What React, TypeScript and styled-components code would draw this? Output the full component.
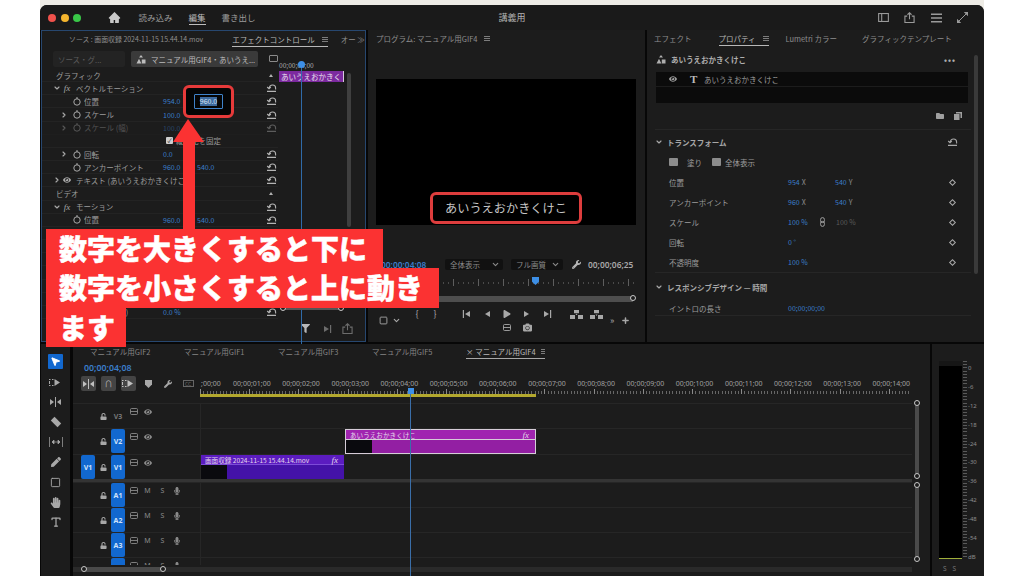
import React from "react";
import styled, { createGlobalStyle } from "styled-components";
import { AiFillHome } from "react-icons/ai";
import { FaEye, FaFilter, FaHandPaper, FaUnlock, FaMicrophone, FaPen, FaPlay, FaWrench, FaCamera, FaFolder } from "react-icons/fa";
import { ChevronDown, ChevronRight, MousePointer2, Plus, Square, Type } from "lucide-react";

const GlobalStyle = createGlobalStyle`
  html, body {
    margin: 0;
    padding: 0;
    background: #fff;
    overflow: hidden;
  }
  * {
    box-sizing: border-box;
  }
`;

const blue = "#3b7ecb";

const Page = styled.div`
  width: 1024px;
  height: 576px;
  padding: 0 40px;
  background: #fff;
  font-family: "Noto Sans CJK JP", "Noto Sans", sans-serif;
  font-size: 7.5px;
  color: #9c9c9c;
`;

const Desk = styled.div`
  height: 576px;
  padding-top: 5px;
  background: #eeece6;
`;

const Window = styled.div`
  position: relative;
  height: 571px;
  padding-left: 1px;
  background: #070707;
  border-radius: 7px 7px 0 0;
  overflow: hidden;
`;

const TitleBar = styled.div`
  height: 25px;
  margin-left: -1px;
  display: grid;
  grid-template-columns: 1fr auto 1fr;
  align-items: center;
  background: #1a1a1a;
  color: #a6a6a6;
`;

const TitleLeft = styled.div`
  display: flex;
  align-items: center;
  padding-left: 8px;
`;

const Light = styled.span<{ $color: string }>`
  width: 8px;
  height: 8px;
  margin-right: 4.5px;
  border-radius: 50%;
  background: ${(p) => p.$color};
`;

const HomeSlot = styled.span`
  display: flex;
  margin: 0 18px 0 22px;
  font-size: 13px;
  color: #c8c8c8;
`;

const NavItem = styled.span<{ $active?: boolean }>`
  margin-right: 16px;
  font-size: 8.5px;
  line-height: 13px;
  color: ${(p) => (p.$active ? "#bdbdbd" : "#9c9c9c")};
  border-bottom: 1px solid ${(p) => (p.$active ? "#bdbdbd" : "transparent")};
`;

const WindowName = styled.span`
  font-size: 9px;
  color: #b4b4b4;
`;

const TitleRight = styled.div`
  display: flex;
  justify-content: flex-end;
  align-items: center;
  gap: 15.5px;
  padding-right: 16px;
  color: #9a9a9a;
`;

const Upper = styled.div`
  height: 312px;
  display: flex;
  gap: 2px;
`;

const Lower = styled.div`
  height: 232px;
  margin-top: 2px;
  display: flex;
  gap: 2px;
`;

const EffectPanel = styled.div`
  width: 325px;
  display: flex;
  flex-direction: column;
  background: #1c1c1c;
  border: 1px solid #27476f;
`;

const ProgramPanel = styled.div`
  width: 277px;
  display: flex;
  flex-direction: column;
  background: #1c1c1c;
`;

const PropertyPanel = styled.div`
  position: relative;
  flex: 1;
  display: flex;
  flex-direction: column;
  background: #1c1c1c;
`;

const Tabs = styled.div<{ $left: number }>`
  height: 17px;
  flex: none;
  display: flex;
  align-items: center;
  padding-left: ${(p) => p.$left}px;
`;

const Tab = styled.span<{ $active?: boolean; $gap?: number }>`
  display: flex;
  align-items: center;
  gap: 7px;
  height: 14px;
  flex: none;
  margin-right: ${(p) => p.$gap ?? 0}px;
  color: ${(p) => (p.$active ? "#b8b8b8" : "#8e8e8e")};
  border-bottom: 1px solid ${(p) => (p.$active ? "#b8b8b8" : "transparent")};
  white-space: nowrap;
`;

const SourceTab = styled(Tab)`
  font-size: 6.9px;
`;

const MenuGlyph = styled.i`
  width: 6px;
  height: 5px;
  border-top: 1px solid #7c7c7c;
  border-bottom: 1px solid #7c7c7c;
  background: linear-gradient(#7c7c7c, #7c7c7c) center / 100% 1px no-repeat;
`;

const EffectBody = styled.div`
  position: relative;
  flex: none;
  display: flex;
`;

const EffectColumn = styled.div`
  width: 236px;
  flex: none;
`;

const SourceRow = styled.div`
  height: 21px;
  padding: 3px 0 2px 11px;
  display: flex;
  gap: 6px;
  align-items: flex-start;
`;

const SourceChip = styled.span<{ $active?: boolean }>`
  height: 16px;
  width: ${(p) => (p.$active ? 127 : 72)}px;
  flex: none;
  display: flex;
  align-items: center;
  gap: 5px;
  padding-left: 5px;
  border-radius: 2px;
  background: ${(p) => (p.$active ? "#3a3a3a" : "#232323")};
  color: ${(p) => (p.$active ? "#bcbcbc" : "#5c5c5c")};
  white-space: nowrap;
  overflow: hidden;
`;

const PanelToggle = styled.span`
  width: 10px;
  height: 7px;
  margin: 4px 0 0 5px;
  border: 1px solid #8a8a8a;
  border-radius: 1px;
`;

const Row = styled.div<{ $dim?: boolean }>`
  height: 13.17px;
  display: flex;
  align-items: center;
  padding-left: 10px;
  border-bottom: 1px solid #232323;
  opacity: ${(p) => (p.$dim ? 0.42 : 1)};
  white-space: nowrap;
`;

const Lead = styled.span<{ $group?: boolean }>`
  width: ${(p) => (p.$group ? 24 : 32)}px;
  flex: none;
  display: flex;
  align-items: center;
  padding-left: ${(p) => (p.$group ? 0 : 7)}px;
  color: #a8a8a8;
`;

const LeadSlot = styled.span<{ $gap?: number }>`
  width: 10px;
  margin-right: ${(p) => p.$gap ?? 0}px;
  display: flex;
  justify-content: center;
`;

const Fx = styled.span`
  font-family: "Liberation Serif", serif;
  font-style: italic;
  font-size: 9px;
  line-height: 10px;
`;

const RowName = styled.span<{ $section?: boolean }>`
  flex: 1;
  min-width: 0;
  padding-left: ${(p) => (p.$section ? 4 : 0)}px;
  overflow: hidden;
`;

const Values = styled.span`
  width: 101px;
  flex: none;
  display: flex;
  align-items: center;
`;

const Value = styled.span`
  width: 34px;
  flex: none;
  font-size: 7px;
  color: ${blue};
`;

const Checkbox = styled.span`
  width: 7px;
  height: 7px;
  margin: 0 3px;
  flex: none;
  display: flex;
  align-items: center;
  justify-content: center;
  background: #cfcfcf;
  border-radius: 1px;
  color: #222;
  font-size: 6px;
  line-height: 7px;
`;

const RowEnd = styled.span`
  width: 14px;
  flex: none;
  display: flex;
  justify-content: center;
  color: #b4b4b4;
`;

const UpTriangle = styled.i`
  width: 0;
  height: 0;
  border-left: 2.5px solid transparent;
  border-right: 2.5px solid transparent;
  border-bottom: 3px solid #b0b0b0;
`;

const MiniTimeline = styled.div`
  position: relative;
  width: 69px;
  flex: none;
  padding-left: 1px;
`;

const MiniLabel = styled.div`
  height: 11px;
  margin-top: 12px;
  font-size: 6.6px;
  line-height: 11px;
  color: #b0b0b0;
  white-space: nowrap;
`;

const MiniClip = styled.div`
  width: 65px;
  height: 11px;
  padding-left: 2px;
  background: #7c2a9f;
  border-right: 1px solid #d8c8e0;
  color: #e9e0ee;
  font-size: 7.5px;
  line-height: 11px;
  white-space: nowrap;
`;

const MiniPlayhead = styled.div`
  position: absolute;
  left: 23px;
  top: 17px;
  bottom: -25px;
  width: 1px;
  background: #2f6aa8;

  &::before {
    content: "";
    position: absolute;
    left: -3px;
    top: -4px;
    width: 7px;
    height: 7px;
    border-radius: 50%;
    background: #3d8fe6;
  }
`;

const MiniSlider = styled.div`
  position: relative;
  width: 58px;
  height: 4px;
  margin: 224px 0 0 4px;
  background: #555;
`;

const Knob = styled.i<{ $side: "left" | "right" | "top" | "bottom" }>`
  position: absolute;
  ${(p) => p.$side}: -3px;
  ${(p) => (p.$side === "left" || p.$side === "right" ? "top: -1px;" : "left: -1px;")}
  width: 6px;
  height: 6px;
  border-radius: 50%;
  background: #1c1c1c;
  border: 1.2px solid #c8c8c8;
`;

const ScrollBar = styled.div<{ $top: number; $height: number }>`
  width: 4px;
  height: ${(p) => p.$height}px;
  margin-top: ${(p) => p.$top}px;
  flex: none;
  border-radius: 2px;
  background: #3f3f3f;
`;

const PanelFooter = styled.div`
  flex: 1;
  display: flex;
  justify-content: flex-end;
  align-items: center;
  gap: 10px;
  padding: 0 12px 2px 0;
  color: #6c6c6c;
`;

const FooterFilter = styled.span`
  display: flex;
  margin-right: 2px;
  color: #b8b8b8;
`;

const Highlight = styled.div`
  position: absolute;
  left: 143px;
  top: 80px;
  width: 51px;
  height: 33px;
  display: flex;
  align-items: center;
  justify-content: center;
  background: #050505;
  border: 3px solid #e63a3a;
  border-radius: 6px;
`;

const NumberInput = styled.div`
  width: 29px;
  height: 15px;
  display: flex;
  align-items: center;
  justify-content: center;
  border: 1.5px solid #3f82c9;
  border-radius: 1px;
`;

const Selected = styled.span`
  background: #3d6a9e;
  color: #d8e4f2;
  font-size: 7px;
  line-height: 9px;
`;

const Arrow = styled.svg`
  position: absolute;
  left: 133px;
  top: 114px;
`;

const Caption = styled.div`
  position: absolute;
  left: 6px;
  top: 224px;
  color: #fff;
  font-size: 28px;
  font-weight: 900;
  line-height: 39.4px;
  white-space: nowrap;
  -webkit-text-stroke: 0.5px #fff;
`;

const CaptionLine = styled.div<{ $end?: number }>`
  width: fit-content;
  padding: 0 ${(p) => p.$end ?? 16}px 0 13px;
  background: #fb3232;
`;

const Video = styled.div`
  width: 260px;
  height: 146px;
  margin: 32px 0 0 8px;
  flex: none;
  display: flex;
  align-items: flex-end;
  justify-content: center;
  padding-bottom: 1px;
  background: #000;
`;

const TitleBox = styled.div`
  width: 152px;
  height: 32px;
  display: flex;
  align-items: center;
  justify-content: center;
  border: 3px solid #dd3d3d;
  border-radius: 6px;
  font-size: 12.2px;
  color: #c4c4c4;
`;

const MonitorRow = styled.div`
  height: 12px;
  margin-top: 33px;
  display: flex;
  align-items: center;
  padding-left: 13px;
`;

const Timecode = styled.span<{ $width?: number }>`
  width: ${(p) => p.$width ?? 47}px;
  flex: none;
  font-family: "Noto Sans", sans-serif;
  font-size: 8.4px;
  font-weight: 600;
  color: ${blue};
  white-space: nowrap;
`;

const Dropdown = styled.span<{ $width: number }>`
  width: ${(p) => p.$width}px;
  height: 11px;
  flex: none;
  margin-left: ${(p) => (p.$width > 55 ? 17 : 8)}px;
  display: flex;
  align-items: center;
  justify-content: space-between;
  padding: 0 3px 0 5px;
  background: #111;
  border-radius: 2px;
  color: #8a8a8a;
`;

const WrenchSlot = styled.span`
  display: flex;
  margin: 0 7px 0 9px;
  font-size: 9px;
  color: #b4b4b4;
`;

const Duration = styled.span`
  font-family: "Noto Sans", sans-serif;
  font-size: 8.4px;
  font-weight: 600;
  color: #a8a8a8;
  white-space: nowrap;
`;

const MonitorRuler = styled.div`
  position: relative;
  height: 10px;
  margin: 7px 9px 0 10px;
  background:
    repeating-linear-gradient(90deg, #5e5e5e 0 1px, transparent 1px 25px) 0 2px / 100% 7px no-repeat,
    repeating-linear-gradient(90deg, #4a4a4a 0 1px, transparent 1px 5px) 0 5px / 100% 2px no-repeat;
`;

const MonitorHead = styled.i`
  position: absolute;
  left: 154px;
  top: 0;
  width: 7px;
  height: 8px;
  background: #3d8fe6;
  clip-path: polygon(0 0, 100% 0, 100% 60%, 50% 100%, 0 60%);
`;

const MonitorBar = styled.div`
  position: relative;
  height: 6px;
  margin: 9px 12px 0 10px;
  background: #4e4e4e;
`;

const Transport = styled.div`
  height: 27px;
  margin-top: 5px;
  display: flex;
  align-items: center;
`;

const TransportLeft = styled.div`
  width: 40px;
  flex: none;
  display: flex;
  align-items: center;
  gap: 4px;
  padding-left: 11px;
  color: #aaa;
`;

const TransportCenter = styled.div`
  width: 198px;
  flex: none;
`;

const ButtonRow = styled.div<{ $left?: number }>`
  height: 13px;
  display: flex;
  align-items: center;
  margin-left: ${(p) => p.$left ?? 0}px;
  color: #a8a8a8;
`;

const Control = styled.span<{ $w?: number; $gap?: number }>`
  width: ${(p) => p.$w ?? 20}px;
  margin-right: ${(p) => p.$gap ?? 0}px;
  flex: none;
  display: flex;
  justify-content: center;
  font-size: 9px;
  line-height: 12px;
`;

const TransportRight = styled.div`
  display: flex;
  align-items: center;
  gap: 7px;
  padding-left: 4px;
  color: #a8a8a8;
  font-size: 9px;
`;

const PropTitle = styled.div`
  height: 25px;
  flex: none;
  display: flex;
  align-items: center;
  padding: 0 28px 0 9px;
  gap: 5px;
  color: #aeaeae;
  font-weight: 700;
`;

const Dots = styled.span`
  margin-left: auto;
  letter-spacing: 1px;
  font-size: 8px;
  font-weight: 700;
`;

const LayerList = styled.div`
  width: 312px;
  height: 31px;
  margin-left: 9px;
  flex: none;
  background: #0b0b0b;
`;

const LayerRow = styled.div`
  height: 15px;
  display: flex;
  align-items: center;
  padding-left: 13px;
  border-bottom: 1px solid #1c1c1c;
  color: #9c9c9c;
`;

const LayerT = styled.span`
  width: 24px;
  padding-left: 13px;
  margin-right: 3px;
  font-family: "Liberation Serif", serif;
  font-size: 11px;
  font-weight: 700;
  line-height: 15px;
  color: #bbb;
`;

const ListTools = styled.div`
  height: 26px;
  flex: none;
  display: flex;
  align-items: center;
  justify-content: flex-end;
  gap: 10px;
  padding-right: 22px;
  color: #a0a0a0;
`;

const Divider = styled.div`
  height: 1px;
  width: 316px;
  margin-left: 8px;
  flex: none;
  background: #262626;
`;

const SectionHead = styled.div<{ $h: number }>`
  height: ${(p) => p.$h}px;
  flex: none;
  display: flex;
  align-items: center;
  gap: 4px;
  padding: 0 26px 0 8px;
  font-weight: 700;
  color: #a8a8a8;
  white-space: nowrap;
`;

const HeadEnd = styled.span`
  margin-left: auto;
  display: flex;
`;

const FillRow = styled.div`
  height: 16px;
  margin-bottom: 2px;
  flex: none;
  display: flex;
  align-items: center;
  padding-left: 22px;
`;

const FillIcon = styled.i<{ $gap: number }>`
  width: 9px;
  height: 8px;
  margin-right: ${(p) => p.$gap}px;
  background: #8c8c8c;
  border-radius: 1px;
`;

const FillLabel = styled.span<{ $w: number }>`
  width: ${(p) => p.$w}px;
`;

const PropRow = styled.div<{ $h?: number }>`
  height: ${(p) => p.$h ?? 20}px;
  flex: none;
  display: flex;
  align-items: center;
  padding: 0 29px 0 22px;
`;

const PropLabel = styled.span`
  width: 119px;
  flex: none;
`;

const PropValue = styled.span`
  width: 47px;
  flex: none;
  display: flex;
  gap: 2px;
  font-size: 7px;
  color: ${blue};
`;

const Axis = styled.span`
  color: #8c8c8c;
`;

const LinkSlot = styled.span`
  width: 18px;
  margin: 0 5px 0 -22px;
  flex: none;
  display: flex;
  justify-content: center;
  color: #a0a0a0;
`;

const DimValue = styled.span`
  font-size: 7px;
  color: #5a5a5a;
`;

const Diamond = styled.i`
  margin-left: auto;
  width: 5px;
  height: 5px;
  border: 1px solid #aaa;
  transform: rotate(45deg);
`;

const PropScroll = styled.div`
  position: absolute;
  left: 327px;
  top: 25px;
  width: 4px;
  height: 219px;
  border-radius: 2px;
  background: #3a3a3a;
`;

const Toolbar = styled.div`
  width: 29px;
  margin-right: 1px;
  padding-top: 8px;
  flex: none;
  display: flex;
  flex-direction: column;
  align-items: center;
  background: #1c1c1c;
  color: #a8a8a8;
`;

const ToolCell = styled.div<{ $active?: boolean }>`
  width: 15px;
  height: ${(p) => (p.$active ? 15 : 20)}px;
  margin: ${(p) => (p.$active ? "2px 0 3px" : 0)};
  flex: none;
  display: flex;
  align-items: center;
  justify-content: center;
  border-radius: 1px;
  background: ${(p) => (p.$active ? "#1268cf" : "transparent")};
  color: ${(p) => (p.$active ? "#fff" : "#a8a8a8")};
`;

const TimelinePanel = styled.div`
  position: relative;
  width: 857px;
  flex: none;
  background: #1c1c1c;
  overflow: hidden;
`;

const SeqTabs = styled.div`
  height: 15px;
  display: flex;
  align-items: center;
  padding-left: 17px;
`;

const SeqTab = styled.span<{ $active?: boolean }>`
  display: flex;
  align-items: center;
  gap: 5px;
  height: 15px;
  width: ${(p) => (p.$active ? 79 : 94)}px;
  flex: none;
  color: ${(p) => (p.$active ? "#b8b8b8" : "#858585")};
  border-bottom: 1px solid ${(p) => (p.$active ? "#a8a8a8" : "transparent")};
  white-space: nowrap;
`;

const TimeHeader = styled.div`
  height: 44px;
  display: flex;
`;

const HeaderLeft = styled.div`
  width: 127px;
  flex: none;
  padding: 2px 0 0 8px;
`;

const HeaderTimecode = styled(Timecode)`
  display: block;
  margin-left: 3px;
  font-size: 8.8px;
  line-height: 14px;
`;

const HeaderTools = styled.div`
  margin-top: 1px;
  display: flex;
  align-items: center;
`;

const ToolButton = styled.span`
  width: 15px;
  height: 15px;
  margin-right: 5px;
  flex: none;
  display: flex;
  align-items: center;
  justify-content: center;
  background: #444;
  border-radius: 2px;
  color: #c0c0c0;
  font-size: 8px;
`;

const ToolIcon = styled.span`
  width: 20px;
  flex: none;
  display: flex;
  justify-content: center;
  color: #a8a8a8;
  font-size: 8px;

  &:nth-child(4) {
    margin-left: -3px;
  }
`;

const CcBox = styled.span`
  width: 11px;
  height: 7px;
  display: flex;
  align-items: center;
  justify-content: center;
  border: 1px solid #666;
  color: #666;
  font-size: 5px;
  line-height: 5px;
`;

const Ruler = styled.div`
  width: 712px;
  padding-top: 20px;
  flex: none;
`;

const RulerLabels = styled.div`
  height: 10px;
  display: flex;
  font-family: "Noto Sans", sans-serif;
  font-size: 7px;
  line-height: 10px;
  color: #a0a0a0;
`;

const RulerLabel = styled.span<{ $first?: boolean }>`
  width: ${(p) => (p.$first ? 33 : 49.2)}px;
  padding-left: ${(p) => (p.$first ? 1 : 0)}px;
  flex: none;
  white-space: nowrap;
`;

const Ticks = styled.div`
  height: 5px;
  background:
    repeating-linear-gradient(90deg, #8a8a8a 0 1px, transparent 1px 49.2px),
    repeating-linear-gradient(90deg, #666 0 1px, transparent 1px 3.28px) 0 2px / 100% 3px no-repeat;
`;

const WorkArea = styled.div`
  width: 336px;
  height: 3px;
  background: #b3a82e;
`;

const TrackArea = styled.div`
  height: 162px;
  display: flex;
`;

const TrackList = styled.div`
  width: 839px;
  flex: none;
`;

const Track = styled.div<{ $h: number }>`
  height: ${(p) => p.$h}px;
  display: flex;
  border-top: 1px solid #262626;
  overflow: hidden;
`;

const TrackHead = styled.div`
  width: 127px;
  height: 24px;
  flex: none;
  display: flex;
  align-items: center;
  padding-left: 8px;
`;

const Patch = styled.span<{ $on?: boolean }>`
  width: 14px;
  height: 24px;
  flex: none;
  display: flex;
  align-items: center;
  justify-content: center;
  border-radius: 2px;
  background: ${(p) => (p.$on ? "#1268cf" : "transparent")};
  color: ${(p) => (p.$on ? "#cfe2fa" : "#777")};
  font-family: "Noto Sans", sans-serif;
  font-size: 7px;
  font-weight: 700;
`;

const LockSlot = styled.span`
  width: 16px;
  flex: none;
  display: flex;
  justify-content: center;
  color: #a8a8a8;
  font-size: 8px;
`;

const TrackIcons = styled.span`
  display: flex;
  align-items: center;
  margin: 0 0 9px 2px;
  color: #8a8a8a;
  font-size: 7px;
  font-family: "Noto Sans", sans-serif;
`;

const TrackIcon = styled.span<{ $w: number }>`
  width: ${(p) => p.$w}px;
  flex: none;
  display: flex;
  justify-content: center;
`;

const Lane = styled.div`
  flex: 1;
  min-width: 0;
  border-left: 1px solid #262626;
`;

const Clip = styled.div<{ $left: number; $width: number; $head: string; $body: string; $edge?: string }>`
  width: ${(p) => p.$width}px;
  height: 100%;
  margin-left: ${(p) => p.$left}px;
  display: flex;
  flex-direction: column;
  background: ${(p) => p.$body};
  border: ${(p) => (p.$edge ? `1px solid ${p.$edge}` : "0")};
  --head: ${(p) => p.$head};
  --edge: ${(p) => p.$edge ?? "#7d4bd8"};
`;

const ClipHead = styled.div`
  height: 10px;
  flex: none;
  display: flex;
  justify-content: space-between;
  align-items: center;
  padding: 0 6px 0 4px;
  background: var(--head);
  border-bottom: 1px solid var(--edge);
  color: #e3d7ea;
  font-size: 6.6px;
  white-space: nowrap;
`;

const ClipThumb = styled.div`
  width: 26px;
  flex: 1;
  background: #0a0a0e;
`;

const ThickLine = styled.div`
  height: 3px;
  margin-top: 0;
  background: #343434;
`;

const ScrollColumn = styled.div`
  width: 18px;
  flex: none;
  display: flex;
  flex-direction: column;
  align-items: flex-start;
  padding-left: 3px;
`;

const VScroll = styled.div<{ $h: number; $gap: number }>`
  position: relative;
  width: 4px;
  height: ${(p) => p.$h}px;
  margin-top: ${(p) => p.$gap}px;
  flex: none;
  background: #4a4a4a;
`;

const BottomScroll = styled.div`
  width: 839px;
  height: 5px;
  margin-top: 2px;
  padding-left: 11px;
  background: #2a2a2a;
`;

const ScrollThumb = styled.div`
  position: relative;
  width: 79px;
  height: 5px;
  background: #4a4a4a;
`;

const Playhead = styled.div`
  position: absolute;
  left: 337px;
  top: 45px;
  bottom: 0;
  width: 1px;
  background: #3a6ea8;

  &::before {
    content: "";
    position: absolute;
    left: -2px;
    top: -1px;
    width: 6px;
    height: 6px;
    background: #3d8fe6;
  }
`;

const MeterPanel = styled.div`
  flex: 1;
  padding: 17px 0 0 7px;
  background: #1c1c1c;
`;

const MeterRow = styled.div`
  height: 198px;
  display: flex;
`;

const MeterBar = styled.div`
  width: 23px;
  flex: none;
  background: linear-gradient(#161616 0 5px, #000 5px);
  border-bottom: 1px solid #9fae3a;
`;

const MeterScale = styled.div`
  width: 4px;
  margin-left: 1px;
  flex: none;
  background: repeating-linear-gradient(#5a5a5a 0 1px, transparent 1px 3.2px);
`;

const MeterLabels = styled.div`
  flex: 1;
  margin-bottom: -2px;
  padding: 3px 0 0 1px;
  display: flex;
  flex-direction: column;
  justify-content: space-between;
  font-family: "Noto Sans", sans-serif;
  font-size: 6px;
  line-height: 8px;
  color: #8c8c8c;
`;

const MeterSolo = styled.div`
  margin-top: 5px;
  display: flex;
  gap: 6px;
  padding-left: 4px;
  font-family: "Noto Sans", sans-serif;
  font-size: 6.5px;
  color: #777;
`;

const ResetIcon = () => (
  <svg width="11" height="8" viewBox="0 0 11 8" fill="none" stroke="currentColor" strokeWidth="1.1">
    <path d="M1 7.4h9M3 4.4C3.4 2 5 1 6.6 1c1.8 0 3 1.2 3 3v1.4M1.2 3l1.8 1.8L4.8 3" />
  </svg>
);

const Stopwatch = () => (
  <svg width="8" height="9" viewBox="0 0 8 9" fill="none" stroke="currentColor" strokeWidth="1">
    <circle cx="4" cy="5" r="3.2" />
    <path d="M4 0v2" />
  </svg>
);

const Chevron = ({ open }: { open?: boolean }) =>
  open ? <ChevronDown size={8} strokeWidth={3.5} /> : <ChevronRight size={8} strokeWidth={3.5} />;

const GraphicIcon = () => (
  <svg width="10" height="9" viewBox="0 0 10 9" fill="currentColor">
    <path d="M5 0l2 2.6H3zM0.5 8.5L3 3.8l2.4 4.7zM5.8 4.5h3.7v4H5.8z" />
  </svg>
);

const CameraTrack = () => (
  <svg width="8" height="7" viewBox="0 0 8 7" fill="none" stroke="currentColor" strokeWidth="0.9">
    <rect x="0.5" y="0.5" width="7" height="6" rx="1" />
    <path d="M0.5 3.5h7" />
  </svg>
);

const PanelIcon = () => (
  <svg width="11" height="9" viewBox="0 0 12 10" fill="none" stroke="currentColor" strokeWidth="1.2">
    <rect x="0.6" y="0.6" width="10.8" height="8.8" />
    <path d="M4 0.6v8.8" />
  </svg>
);

const ShareIcon = () => (
  <svg width="11" height="11" viewBox="0 0 12 12" fill="none" stroke="currentColor" strokeWidth="1.2">
    <path d="M3.5 4.5H1v7h10v-7H8.5M6 8V0.8M3.8 3L6 0.8 8.2 3" />
  </svg>
);

const LinesIcon = () => (
  <svg width="11" height="10" viewBox="0 0 12 10" stroke="currentColor" strokeWidth="1.6">
    <path d="M0 1h12M0 5h12M0 9h12" />
  </svg>
);

const ExpandIcon = () => (
  <svg width="11" height="11" viewBox="0 0 11 11" fill="currentColor">
    <path d="M11 0v4.2L6.8 0zM0 11V6.8L4.2 11z" />
    <path d="M2 9l7-7" stroke="currentColor" />
  </svg>
);

const LinkIcon = () => (
  <svg width="5" height="10" viewBox="0 0 5 10" fill="none" stroke="currentColor" strokeWidth="1">
    <rect x="0.6" y="0.6" width="3.8" height="5" rx="1.9" />
    <rect x="0.6" y="4.4" width="3.8" height="5" rx="1.9" />
  </svg>
);

const MarkerIcon = () => (
  <svg width="7" height="8" viewBox="0 0 7 8" fill="currentColor">
    <path d="M0 0h7v4.5L3.5 8 0 4.5z" />
  </svg>
);

const NewItemIcon = () => (
  <svg width="8" height="8" viewBox="0 0 8 8" fill="currentColor">
    <path d="M2 0h6v6H6.5V1.5H2zM0 2h5.5v6H0z" />
  </svg>
);

const StepIcon = ({ flip, bar }: { flip?: boolean; bar?: boolean }) => (
  <svg width="10" height="8" viewBox="0 0 10 8" fill="currentColor" style={flip ? { transform: "scaleX(-1)" } : undefined}>
    <path d="M2 1v6L7 4z" />
    {bar && <path d="M8 0h1.2v8H8z" />}
  </svg>
);

const LiftIcon = ({ down }: { down?: boolean }) => (
  <svg width="13" height="9" viewBox="0 0 13 9" fill="currentColor">
    <path d="M4 0h5v3.2H4zM0 5h5v4H0zM8 5h5v4H8z" />
    <path d={down ? "M5.5 4.5h2L6.5 6z" : "M6.5 3.6l1 1.4h-2z"} />
  </svg>
);

const TrackSelectIcon = () => (
  <svg width="13" height="9" viewBox="0 0 13 9" fill="currentColor">
    <path d="M0 1h1.5v1H0zM3 1h1.5v1H3zM0 7h1.5v1H0zM3 7h1.5v1H3zM0 3h1v3H0zM5.5 1v7L11 4.5z" />
  </svg>
);

const RippleIcon = () => (
  <svg width="13" height="10" viewBox="0 0 13 10" fill="currentColor">
    <path d="M6 0h1v10H6zM5 5L1 2v6zM8 5l4-3v6z" />
  </svg>
);

const RazorIcon = () => (
  <svg width="12" height="12" viewBox="0 0 12 12" fill="currentColor">
    <path d="M4.5 0.8L11.2 7.5 7.5 11.2 0.8 4.5z" />
  </svg>
);

const SlipIcon = () => (
  <svg width="14" height="10" viewBox="0 0 14 10" fill="currentColor" stroke="currentColor" strokeWidth="0.7">
    <path d="M0.5 0v10M13.5 0v10M3 5h8M3 5l2-2v4zM11 5L9 3v4z" />
  </svg>
);

const effectRows = [
  { type: "section", name: "グラフィック" },
  { type: "group", name: "ベクトルモーション", fx: true, open: true },
  { type: "prop", name: "位置", values: ["954.0"] },
  { type: "prop", name: "スケール", values: ["100.0"], chevron: true },
  { type: "prop", name: "スケール (幅)", values: ["100.0"], chevron: true, dim: true },
  { type: "check", name: "", label: "縦横比を固定" },
  { type: "prop", name: "回転", values: ["0.0"], chevron: true },
  { type: "prop", name: "アンカーポイント", values: ["960.0", "540.0"] },
  { type: "group", name: "テキスト (あいうえおかきくけこ)" },
  { type: "section", name: "ビデオ" },
  { type: "group", name: "モーション", fx: true, open: true },
  { type: "prop", name: "位置", values: ["960.0", "540.0"] },
  { type: "spacer", name: "" },
  { type: "spacer", name: "" },
  { type: "spacer", name: "" },
  { type: "spacer", name: "" },
  { type: "spacer", name: "" },
  { type: "spacer", name: "" },
  { type: "prop", name: "切り抜き (幅)", values: ["0.0 %"] },
];

const transformRows = [
  { name: "位置", x: "954", y: "540" },
  { name: "アンカーポイント", x: "960", y: "540" },
  { name: "スケール", pct: "100 %", link: "100 %" },
  { name: "回転", pct: "0 °" },
  { name: "不透明度", pct: "100 %" },
];

const rulerLabels = [
  "00;00;01;00", "00;00;02;00", "00;00;03;00", "00;00;04;00", "00;00;05;00", "00;00;06;00", "00;00;07;00",
  "00;00;08;00", "00;00;09;00", "00;00;10;00", "00;00;11;00", "00;00;12;00", "00;00;13;00", "00;00;14;00",
];

const meterLabels = ["0", "-6", "-12", "-18", "-24", "-30", "-36", "-42", "-48", "-54", "dB"];

const EffectLine = ({ row }: { row: (typeof effectRows)[number] }) => {
  if (row.type === "spacer") return <Row />;
  if (row.type === "section") {
    return (
      <Row>
        <RowName $section>{row.name}</RowName>
        <RowEnd>
          <UpTriangle />
        </RowEnd>
      </Row>
    );
  }
  if (row.type === "group") {
    return (
      <Row>
        <Lead $group>
          <LeadSlot>
            <Chevron open={row.open} />
          </LeadSlot>
          <LeadSlot $gap={4}>{row.fx ? <Fx>fx</Fx> : <FaEye size={8} />}</LeadSlot>
        </Lead>
        <RowName>{row.name}</RowName>
        <RowEnd>
          <ResetIcon />
        </RowEnd>
      </Row>
    );
  }
  if (row.type === "check") {
    return (
      <Row>
        <Lead />
        <RowName />
        <Values>
          <Checkbox>✓</Checkbox>
          <span>{row.label}</span>
        </Values>
        <RowEnd />
      </Row>
    );
  }
  return (
    <Row $dim={row.dim}>
      <Lead>
        <LeadSlot $gap={3}>{row.chevron && <Chevron />}</LeadSlot>
        <LeadSlot $gap={2}>{row.name === "切り抜き (幅)" ? null : <Stopwatch />}</LeadSlot>
      </Lead>
      <RowName>{row.name}</RowName>
      <Values>
        {row.values?.map((v) => (
          <Value key={v}>{v}</Value>
        ))}
      </Values>
      <RowEnd>
        <ResetIcon />
      </RowEnd>
    </Row>
  );
};

const VideoTrack = ({ name, patch, on, children, h }: { name: string; patch?: boolean; on?: boolean; children?: React.ReactNode; h: number }) => (
  <Track $h={h}>
    <TrackHead>
      <Patch $on={patch}>{patch ? "V1" : ""}</Patch>
      <LockSlot>
        <FaUnlock size={7} />
      </LockSlot>
      <Patch $on={on}>{name}</Patch>
      <TrackIcons>
        <TrackIcon $w={13}>
          <CameraTrack />
        </TrackIcon>
        <TrackIcon $w={15}>
          <FaEye size={8} />
        </TrackIcon>
      </TrackIcons>
    </TrackHead>
    <Lane>{children}</Lane>
  </Track>
);

const AudioTrack = ({ name, h }: { name: string; h: number }) => (
  <Track $h={h}>
    <TrackHead>
      <Patch />
      <LockSlot>
        <FaUnlock size={7} />
      </LockSlot>
      <Patch $on>{name}</Patch>
      <TrackIcons>
        <TrackIcon $w={13}>
          <CameraTrack />
        </TrackIcon>
        <TrackIcon $w={15}>M</TrackIcon>
        <TrackIcon $w={15}>S</TrackIcon>
        <TrackIcon $w={14}>
          <FaMicrophone size={8} />
        </TrackIcon>
      </TrackIcons>
    </TrackHead>
    <Lane />
  </Track>
);

const App = () => {
  return (
    <Page>
      <GlobalStyle />
      <Desk>
        <Window>
          <TitleBar>
            <TitleLeft>
              <Light $color="#f0524c" />
              <Light $color="#f4b52e" />
              <Light $color="#39c748" />
              <HomeSlot>
                <AiFillHome />
              </HomeSlot>
              <NavItem>読み込み</NavItem>
              <NavItem $active>編集</NavItem>
              <NavItem>書き出し</NavItem>
            </TitleLeft>
            <WindowName>講義用</WindowName>
            <TitleRight>
              <PanelIcon />
              <ShareIcon />
              <LinesIcon />
              <ExpandIcon />
            </TitleRight>
          </TitleBar>

          <Upper>
            <EffectPanel>
              <Tabs $left={27}>
                <SourceTab $gap={29}>ソース : 画面収録 2024-11-15 15.44.14.mov</SourceTab>
                <Tab $active $gap={13}>
                  エフェクトコントロール
                  <MenuGlyph />
                </Tab>
                <Tab>オー ≫</Tab>
              </Tabs>
              <EffectBody>
                <EffectColumn>
                  <SourceRow>
                    <SourceChip>ソース・グ...</SourceChip>
                    <SourceChip $active>
                      <GraphicIcon />
                      マニュアル用GIF4・あいうえ...
                    </SourceChip>
                    <PanelToggle />
                  </SourceRow>
                  {effectRows.map((row, i) => (
                    <EffectLine key={i} row={row} />
                  ))}
                </EffectColumn>
                <MiniTimeline>
                  <MiniLabel>00;00;04;00</MiniLabel>
                  <MiniClip>あいうえおかきく</MiniClip>
                  <MiniPlayhead />
                  <MiniSlider>
                    <Knob $side="left" />
                    <Knob $side="right" />
                  </MiniSlider>
                </MiniTimeline>
                <ScrollBar $top={25} $height={154} />
              </EffectBody>
              <PanelFooter>
                <FooterFilter>
                  <FaFilter size={9} />
                </FooterFilter>
                <StepIcon bar />
                <ShareIcon />
              </PanelFooter>
            </EffectPanel>

            <ProgramPanel>
              <Tabs $left={8}>
                <Tab $gap={0}>
                  プログラム: マニュアル用GIF4
                  <MenuGlyph />
                </Tab>
              </Tabs>
              <Video>
                <TitleBox>あいうえおかきくけこ</TitleBox>
              </Video>
              <MonitorRow>
                <Timecode $width={47}>00;00;04;08</Timecode>
                <Dropdown $width={58}>
                  全体表示
                  <ChevronDown size={9} strokeWidth={3} />
                </Dropdown>
                <Dropdown $width={52}>
                  フル画質
                  <ChevronDown size={9} strokeWidth={3} />
                </Dropdown>
                <WrenchSlot>
                  <FaWrench />
                </WrenchSlot>
                <Duration>00;00;06;25</Duration>
              </MonitorRow>
              <MonitorRuler>
                <MonitorHead />
              </MonitorRuler>
              <MonitorBar>
                <Knob $side="right" />
              </MonitorBar>
              <Transport>
                <TransportLeft>
                  <Square size={9} strokeDasharray="2 1" />
                  <ChevronDown size={9} strokeWidth={3} />
                </TransportLeft>
                <TransportCenter>
                  <ButtonRow>
                    <Control $w={18}>{"{"}</Control>
                    <Control $w={18} $gap={13}>
                      {"}"}
                    </Control>
                    <Control>
                      <StepIcon flip bar />
                    </Control>
                    <Control>
                      <StepIcon flip />
                    </Control>
                    <Control>
                      <FaPlay size={8} />
                    </Control>
                    <Control>
                      <StepIcon />
                    </Control>
                    <Control $gap={9}>
                      <StepIcon bar />
                    </Control>
                    <Control>
                      <LiftIcon />
                    </Control>
                    <Control>
                      <LiftIcon down />
                    </Control>
                  </ButtonRow>
                  <ButtonRow $left={89}>
                    <Control>
                      <CameraTrack />
                    </Control>
                    <Control>
                      <FaCamera size={9} />
                    </Control>
                  </ButtonRow>
                </TransportCenter>
                <TransportRight>
                  »
                  <Plus size={9} strokeWidth={4} />
                </TransportRight>
              </Transport>
            </ProgramPanel>

            <PropertyPanel>
              <Tabs $left={7}>
                <Tab $gap={27}>エフェクト</Tab>
                <Tab $active $gap={17}>
                  プロパティ
                  <MenuGlyph />
                </Tab>
                <Tab $gap={25}>Lumetri カラー</Tab>
                <Tab>グラフィックテンプレート</Tab>
              </Tabs>
              <PropTitle>
                <GraphicIcon />
                あいうえおかきくけこ
                <Dots>•••</Dots>
              </PropTitle>
              <LayerList>
                <LayerRow>
                  <FaEye size={8} />
                  <LayerT>T</LayerT>
                  あいうえおかきくけこ
                </LayerRow>
              </LayerList>
              <ListTools>
                <FaFolder size={8} />
                <NewItemIcon />
              </ListTools>
              <Divider />
              <SectionHead $h={24}>
                <ChevronDown size={8} strokeWidth={3.5} />
                トランスフォーム
                <HeadEnd>
                  <ResetIcon />
                </HeadEnd>
              </SectionHead>
              <FillRow>
                <FillIcon $gap={9} />
                <FillLabel $w={25}>塗り</FillLabel>
                <FillIcon $gap={4} />
                全体表示
              </FillRow>
              {transformRows.map((r) => (
                <PropRow key={r.name}>
                  <PropLabel>{r.name}</PropLabel>
                  {r.x ? (
                    <>
                      <PropValue>
                        {r.x} <Axis>X</Axis>
                      </PropValue>
                      <PropValue>
                        {r.y} <Axis>Y</Axis>
                      </PropValue>
                    </>
                  ) : (
                    <>
                      <PropValue>{r.pct}</PropValue>
                      {r.link && (
                        <>
                          <LinkSlot>
                            <LinkIcon />
                          </LinkSlot>
                          <DimValue>{r.link}</DimValue>
                        </>
                      )}
                    </>
                  )}
                  <Diamond />
                </PropRow>
              ))}
              <Divider />
              <SectionHead $h={28}>
                <ChevronDown size={8} strokeWidth={3.5} />
                レスポンシブデザイン — 時間
              </SectionHead>
              <PropRow $h={14}>
                <PropLabel>イントロの長さ</PropLabel>
                <PropValue>00;00;00;00</PropValue>
              </PropRow>
              <Divider />
              <PropScroll />
            </PropertyPanel>
          </Upper>

          <Lower>
            <Toolbar>
              <ToolCell $active>
                <MousePointer2 size={11} fill="#fff" />
              </ToolCell>
              <ToolCell>
                <TrackSelectIcon />
              </ToolCell>
              <ToolCell>
                <RippleIcon />
              </ToolCell>
              <ToolCell>
                <RazorIcon />
              </ToolCell>
              <ToolCell>
                <SlipIcon />
              </ToolCell>
              <ToolCell>
                <FaPen size={10} />
              </ToolCell>
              <ToolCell>
                <Square size={11} />
              </ToolCell>
              <ToolCell>
                <FaHandPaper size={11} />
              </ToolCell>
              <ToolCell>
                <Type size={12} strokeWidth={2.5} />
              </ToolCell>
            </Toolbar>

            <TimelinePanel>
              <SeqTabs>
                <SeqTab>マニュアル用GIF2</SeqTab>
                <SeqTab>マニュアル用GIF1</SeqTab>
                <SeqTab>マニュアル用GIF3</SeqTab>
                <SeqTab>マニュアル用GIF5</SeqTab>
                <SeqTab $active>
                  × マニュアル用GIF4
                  <MenuGlyph />
                </SeqTab>
              </SeqTabs>
              <TimeHeader>
                <HeaderLeft>
                  <HeaderTimecode>00;00;04;08</HeaderTimecode>
                  <HeaderTools>
                    <ToolButton>
                      <RippleIcon />
                    </ToolButton>
                    <ToolButton>∩</ToolButton>
                    <ToolButton>
                      <TrackSelectIcon />
                    </ToolButton>
                    <ToolIcon>
                      <MarkerIcon />
                    </ToolIcon>
                    <ToolIcon>
                      <FaWrench />
                    </ToolIcon>
                    <ToolIcon>
                      <CcBox>CC</CcBox>
                    </ToolIcon>
                  </HeaderTools>
                </HeaderLeft>
                <Ruler>
                  <RulerLabels>
                    <RulerLabel $first>;00;00</RulerLabel>
                    {rulerLabels.map((l) => (
                      <RulerLabel key={l}>{l}</RulerLabel>
                    ))}
                  </RulerLabels>
                  <Ticks />
                  <WorkArea />
                </Ruler>
              </TimeHeader>
              <TrackArea>
                <TrackList>
                  <VideoTrack name="V3" h={25} />
                  <VideoTrack name="V2" on h={26}>
                    <Clip $left={144} $width={191} $head="#a024b0" $body="#931fa3" $edge="#d6ccd8">
                      <ClipHead>
                        あいうえおかきくけこ
                        <Fx>fx</Fx>
                      </ClipHead>
                      <ClipThumb />
                    </Clip>
                  </VideoTrack>
                  <VideoTrack name="V1" patch on h={25}>
                    <Clip $left={0} $width={143} $head="#5b1cc0" $body="#4412a8">
                      <ClipHead>
                        画面収録 2024-11-15 15.44.14.mov
                        <Fx>fx</Fx>
                      </ClipHead>
                      <ClipThumb />
                    </Clip>
                  </VideoTrack>
                  <ThickLine />
                  <AudioTrack name="A1" h={25} />
                  <AudioTrack name="A2" h={25} />
                  <AudioTrack name="A3" h={25} />
                  <AudioTrack name="" h={8} />
                </TrackList>
                <ScrollColumn>
                  <VScroll $h={73} $gap={0}>
                    <Knob $side="top" />
                    <Knob $side="bottom" />
                  </VScroll>
                  <VScroll $h={74} $gap={9}>
                    <Knob $side="top" />
                    <Knob $side="bottom" />
                  </VScroll>
                </ScrollColumn>
              </TrackArea>
              <BottomScroll>
                <ScrollThumb>
                  <Knob $side="left" />
                  <Knob $side="right" />
                </ScrollThumb>
              </BottomScroll>
              <Playhead />
            </TimelinePanel>

            <MeterPanel>
              <MeterRow>
                <MeterBar />
                <MeterScale />
                <MeterLabels>
                  {meterLabels.map((l) => (
                    <span key={l}>{l}</span>
                  ))}
                </MeterLabels>
              </MeterRow>
              <MeterSolo>
                <span>S</span>
                <span>S</span>
              </MeterSolo>
            </MeterPanel>
          </Lower>

          <Highlight>
            <NumberInput>
              <Selected>960.0</Selected>
            </NumberInput>
          </Highlight>
          <Arrow width="32" height="112" viewBox="0 0 32 112">
            <polygon points="15,0 31,23 22,23 22,112 10,112 10,23 0,23" fill="#fb3232" />
          </Arrow>
          <Caption>
            <CaptionLine>数字を大きくすると下に</CaptionLine>
            <CaptionLine>数字を小さくすると上に動き</CaptionLine>
            <CaptionLine $end={11}>ます</CaptionLine>
          </Caption>
        </Window>
      </Desk>
    </Page>
  );
};

export default App;
